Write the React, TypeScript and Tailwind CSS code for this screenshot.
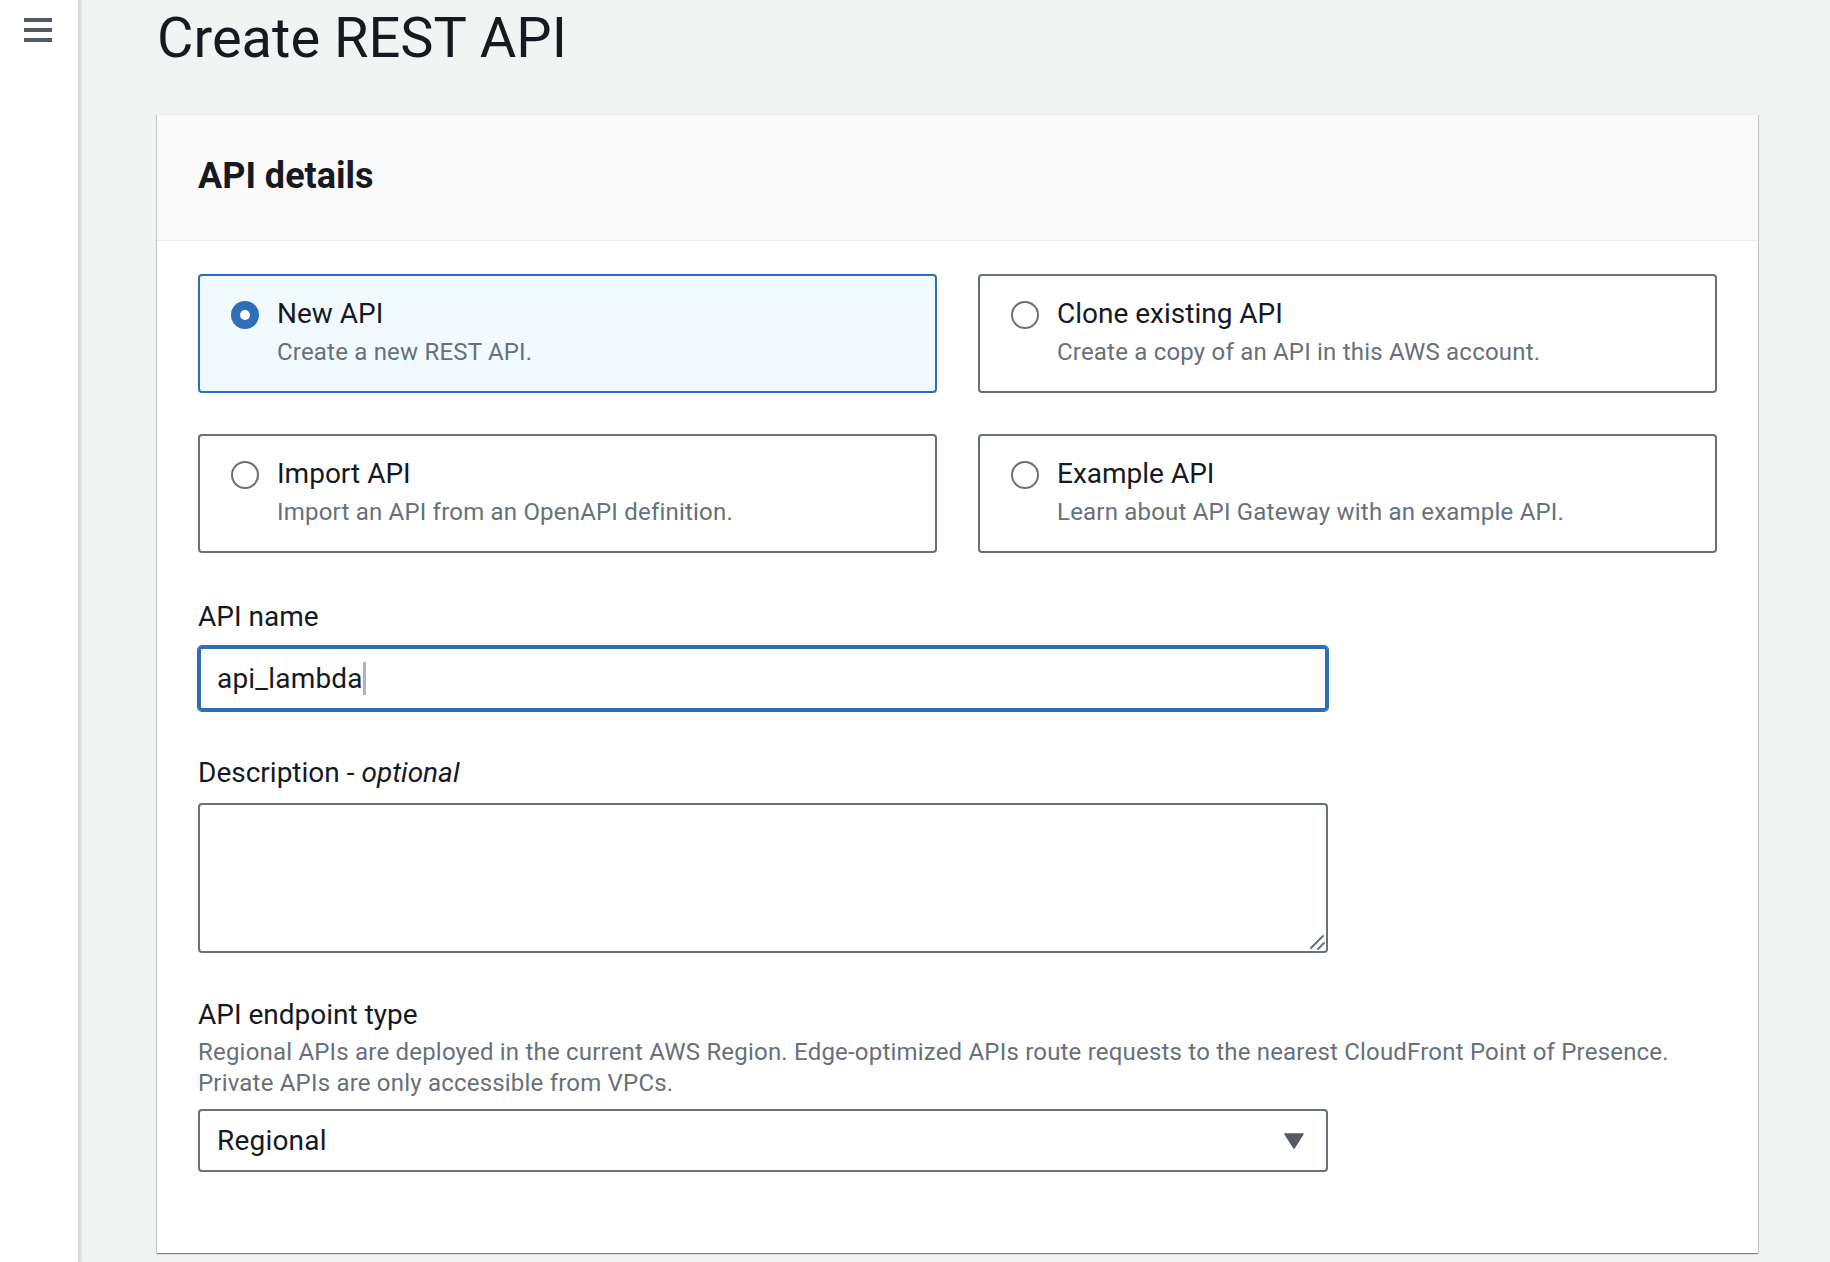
import { useState } from "react";

const font = "font-['Roboto','Liberation_Sans',sans-serif]";

type Choice = { id: string; title: string; desc: string };

const choices: Choice[] = [
  { id: "new", title: "New API", desc: "Create a new REST API." },
  { id: "clone", title: "Clone existing API", desc: "Create a copy of an API in this AWS account." },
  { id: "import", title: "Import API", desc: "Import an API from an OpenAPI definition." },
  { id: "example", title: "Example API", desc: "Learn about API Gateway with an example API." },
];

function Radio({ on }: { on: boolean }) {
  if (on)
    return (
      <span className="mt-[9px] flex h-[28px] w-[28px] shrink-0 items-center justify-center rounded-full bg-[#2c6fb7]">
        <span className="h-[10px] w-[10px] rounded-full bg-white" />
      </span>
    );
  return <span className="mt-[9px] h-[28px] w-[28px] shrink-0 rounded-full border-2 border-[#687078] bg-white" />;
}

function Tile({ c, on, pick }: { c: Choice; on: boolean; pick: () => void }) {
  return (
    <div
      onClick={pick}
      className={`flex h-[119px] cursor-pointer gap-[18px] rounded-[4px] border-2 pl-[31px] pt-[16px] ${
        on ? "border-[#2c6fb7] bg-[#f1faff]" : "border-[#687078] bg-white"
      }`}
    >
      <Radio on={on} />
      <div>
        <div className="text-[28px] leading-[44px] text-[#16191f]">{c.title}</div>
        <div className="text-[24px] leading-[32px] tracking-[0.2px] text-[#687078]">{c.desc}</div>
      </div>
    </div>
  );
}

export default function App() {
  const [sel, setSel] = useState("new");

  return (
    <div className={`${font} flex h-[1262px] overflow-hidden bg-[#f2f3f3] text-[#16191f]`}>
      {/* side nav, collapsed */}
      <aside className="w-[80px] shrink-0 border-r-2 border-[#d5dbdb] bg-white pl-[24px] pt-[18px] shadow-[1px_0_2px_rgba(0,28,36,0.15)]">
        <svg width="28" height="24" viewBox="0 0 28 24">
          <rect x="0" y="0" width="28" height="4" fill="#545b64" />
          <rect x="0" y="10" width="28" height="4" fill="#545b64" />
          <rect x="0" y="20" width="28" height="4" fill="#545b64" />
        </svg>
      </aside>

      <main className="flex-1 pl-[77px] pr-[72px]">
        <h1 className="mt-[10px] text-[56px] leading-[56px] font-normal">Create REST API</h1>

        <section className="mt-[48px] border-t border-[#eaeded] bg-white shadow-[0_1px_1px_0_rgba(0,28,36,0.3),1px_1px_1px_0_rgba(0,28,36,0.15),-1px_1px_1px_0_rgba(0,28,36,0.15)]">
          <header className="border-b border-[#eaeded] bg-[#fafafa] pb-[46px] pl-[41px] pt-[43px]">
            <h2 className="text-[36px] leading-[36px] font-bold">API details</h2>
          </header>

          <div className="px-[41px] pb-[81px] pt-[33px]">
            <div className="grid grid-cols-2 gap-x-[41px] gap-y-[41px]">
              {choices.map((c) => (
                <Tile key={c.id} c={c} on={sel === c.id} pick={() => setSel(c.id)} />
              ))}
            </div>

            <div className="w-[1130px]">
              <label className="mt-[42px] block text-[28px] leading-[44px]">API name</label>
              <div className="mt-[7px] flex h-[65px] items-center rounded-[4px] border-[3px] border-[#2c6fb7] pl-[16px] shadow-[0_0_0_1px_#2c6fb7]">
                <span className="text-[28px] leading-[44px] tracking-[0.2px]">api_lambda</span>
                <span className="h-[33px] w-[3px] bg-[#b0b4b8]" />
              </div>

              <label className="mt-[40px] block text-[28px] leading-[44px]">
                Description - <i>optional</i>
              </label>
              <div className="relative mt-[8px]">
                <textarea className="block h-[150px] w-full resize-none rounded-[4px] border-2 border-[#687078] bg-white outline-none" />
                <svg className="pointer-events-none absolute bottom-[3px] right-[3px]" width="16" height="16" viewBox="0 0 16 16">
                  <path d="M2 14L14 2M9 15L15 9" stroke="#687078" strokeWidth="2" strokeLinecap="round" />
                </svg>
              </div>

              <label className="mt-[40px] block text-[28px] leading-[44px]">API endpoint type</label>
            </div>
            <p className="text-[24px] leading-[31px] tracking-[0.2px] text-[#687078]">
              Regional APIs are deployed in the current AWS Region. Edge-optimized APIs route requests to the nearest CloudFront Point of Presence.
              <br />
              Private APIs are only accessible from VPCs.
            </p>
            <div className="mt-[10px] flex h-[63px] w-[1130px] items-center justify-between rounded-[4px] border-2 border-[#687078] pl-[17px] pr-[22px]">
              <span className="text-[28px] leading-[44px] tracking-[0.2px]">Regional</span>
              <svg width="20" height="16" viewBox="0 0 20 16">
                <path d="M1 1h18L10 15z" fill="#545b64" stroke="#545b64" strokeWidth="1.5" strokeLinejoin="round" />
              </svg>
            </div>
          </div>
        </section>
      </main>
    </div>
  );
}
